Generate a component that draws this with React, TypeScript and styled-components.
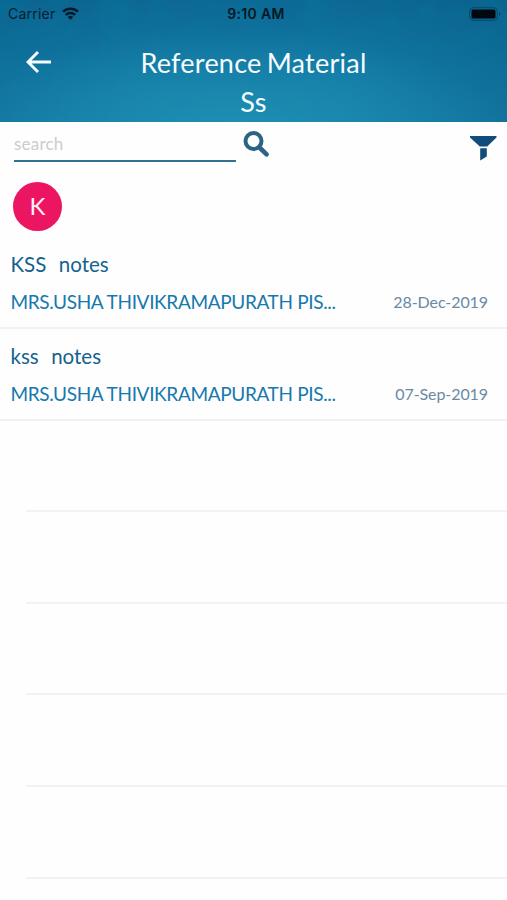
import React from 'react';
import styled, { createGlobalStyle } from 'styled-components';

const GlobalStyle = createGlobalStyle`
  * { box-sizing: border-box; }
  body { margin: 0; background: #fefefe; font-family: Lato, sans-serif; }
`;

const Screen = styled.main`
  display: flex;
  flex-direction: column;
  width: 507px;
  height: 900px;
  overflow: hidden;
  background: #fefefe;
`;

const Header = styled.header`
  position: relative;
  isolation: isolate;
  height: 122px;
  flex: none;
  background:
    radial-gradient(ellipse 270px 105px at 46% 108%, rgba(32, 147, 181, 0.8), rgba(32, 147, 181, 0) 100%),
    linear-gradient(to right, rgba(0, 75, 115, 0.14), transparent 30%, transparent 68%, rgba(0, 75, 115, 0.22)),
    linear-gradient(#0d6894, #1278a3 55%, #167fa9);
`;

const Texture = styled.svg`
  position: absolute;
  inset: 0;
  z-index: -1;
  width: 100%;
  height: 100%;
`;

const StatusBar = styled.div`
  display: grid;
  grid-template-columns: 1fr auto 1fr;
  align-items: center;
  height: 27px;
  padding: 0 6px 0 8px;
  color: #06202f;
  font-family: Inter, sans-serif;
  font-size: 14px;
`;

const Carrier = styled.div`
  display: flex;
  align-items: center;
  gap: 7px;
  letter-spacing: 0.22px;
`;

const Clock = styled.time`
  padding-left: 3px;
  color: #041824;
  font-size: 14px;
  font-weight: 600;
  letter-spacing: 0.34px;
`;

const BatteryIcon = styled.svg`
  justify-self: end;
`;

const TitleBar = styled.div`
  display: grid;
  grid-template-columns: 100px 1fr 100px;
  padding-top: 16px;
`;

const BackButton = styled.button`
  display: flex;
  align-items: flex-start;
  height: 40px;
  padding: 7px 0 0 26px;
  border: 0;
  background: none;
`;

const Title = styled.h1`
  margin: 0;
  color: #f5fcff;
  font-size: 27px;
  font-weight: 400;
  line-height: 39px;
  letter-spacing: 0.24px;
  word-spacing: -2px;
  text-align: center;
`;

const Toolbar = styled.section`
  display: flex;
  align-items: flex-start;
  height: 58px;
  flex: none;
  padding: 0 10px 0 14px;
`;

const SearchInput = styled.input`
  width: 222px;
  height: 40px;
  padding: 4px 0 0;
  border: 0;
  border-bottom: 2px solid #34708f;
  outline: 0;
  background: none;
  color: #125b80;
  font: 17px Lato, sans-serif;
  letter-spacing: 0.2px;
  &::placeholder { color: #cbcccd; opacity: 1; }
`;

const IconButton = styled.button<{ $end?: boolean }>`
  display: flex;
  margin-top: ${(p) => (p.$end ? '12px' : '8px')};
  margin-left: ${(p) => (p.$end ? 'auto' : '7px')};
  padding: 0;
  border: 0;
  background: none;
`;

const Avatar = styled.div`
  display: flex;
  align-items: center;
  justify-content: center;
  width: 49px;
  height: 49px;
  flex: none;
  margin: 2px 0 6px 13px;
  padding-bottom: 2px;
  border-radius: 50%;
  background: #ec1561;
  color: #fff0f6;
  font-size: 24px;
`;

const List = styled.ul`
  margin: 0;
  padding: 0;
  list-style: none;
`;

const Row = styled.li`
  height: 91.7px;
  padding: 0 19px 0 10.5px;
  border-bottom: 2px solid #f1f1f2;
  &:first-child { height: 92px; }
`;

const RowTitle = styled.h2`
  margin: 0;
  padding-top: 12px;
  color: #14628d;
  font-size: 20.5px;
  font-weight: 400;
  line-height: 30px;
  word-spacing: 1px;
  white-space: pre;
`;

const RowMeta = styled.div`
  display: flex;
  align-items: center;
  justify-content: space-between;
  height: 45px;
`;

const Author = styled.span`
  color: #1778ad;
  font-size: 19px;
  letter-spacing: -0.35px;
`;

const DateText = styled.time`
  padding-bottom: 1px;
  color: #6989a5;
  font-size: 16px;
  letter-spacing: -0.08px;
`;

const EmptyRow = styled.li`
  height: 91.6px;
  margin-left: 26px;
  border-bottom: 2px solid #f2f2f3;
`;

const notes = [
  { title: 'KSS  notes', author: 'MRS.USHA THIVIKRAMAPURATH PIS...', date: '28-Dec-2019' },
  { title: 'kss  notes', author: 'MRS.USHA THIVIKRAMAPURATH PIS...', date: '07-Sep-2019' },
];

export default function App() {
  return (
    <Screen>
      <GlobalStyle />
      <Header>
        <Texture aria-hidden="true">
          <defs>
            <filter id="clouds" x="0" y="0" width="100%" height="100%">
              <feTurbulence type="fractalNoise" baseFrequency="0.03 0.05" numOctaves="4" seed="4" />
              <feColorMatrix values="0 0 0 0 0  0 0 0 0 0.25  0 0 0 0 0.4  0.5 0 0 0 -0.18" />
            </filter>
            <linearGradient id="fade" x2="0" y2="1">
              <stop stopColor="#fff" />
              <stop offset="1" stopColor="#000" />
            </linearGradient>
            <mask id="topFade"><rect width="507" height="90" fill="url(#fade)" /></mask>
          </defs>
          <g mask="url(#topFade)"><rect width="507" height="122" filter="url(#clouds)" /></g>
        </Texture>
        <StatusBar>
          <Carrier>
            Carrier
            <svg width="17" height="13" viewBox="0 0 17 13" fill="none" stroke="#041b29" strokeWidth="2.5">
              <path d="M1 4.7a10.8 10.8 0 0 1 15 0M3.8 7.9a6.8 6.8 0 0 1 9.4 0" />
              <path d="M8.5 12.7 5.8 10a3.9 3.9 0 0 1 5.4 0Z" fill="#041b29" stroke="none" />
            </svg>
          </Carrier>
          <Clock>9:10 AM</Clock>
          <BatteryIcon width="32" height="14" viewBox="0 0 32 14">
            <rect x=".7" y=".7" width="27.6" height="12.6" rx="3.5" fill="none" stroke="#06476a" />
            <rect x="2.5" y="2.5" width="24" height="9" rx="1.5" fill="#01080f" />
            <path d="M30 5v4q1.5-.5 1.5-2T30 5" fill="#06476a" />
          </BatteryIcon>
        </StatusBar>
        <TitleBar>
          <BackButton aria-label="Back">
            <svg width="26" height="24" viewBox="0 0 26 24" fill="none" stroke="#f5fcff" strokeWidth="2.9">
              <path d="M25 12H2.5M12 2 2 12l10 10" />
            </svg>
          </BackButton>
          <Title>Reference Material<br />Ss</Title>
        </TitleBar>
      </Header>
      <Toolbar>
        <SearchInput placeholder="search" aria-label="search" />
        <IconButton aria-label="Search">
          <svg width="27" height="28" viewBox="0 0 27 28" fill="none" stroke="#2b6583">
            <circle cx="10.5" cy="11" r="8" strokeWidth="4" />
            <path d="m17 18 6.6 6.4" strokeWidth="4.6" strokeLinecap="round" />
          </svg>
        </IconButton>
        <IconButton $end aria-label="Filter">
          <svg width="27" height="27" viewBox="0 0 27 27" fill="#124c7d">
            <path d="M0 2h26.5v1.5L17.2 12.6H9.8L0 3.5ZM10.2 14.2h6.6v8.2l-6.6 4Z" />
          </svg>
        </IconButton>
      </Toolbar>
      <Avatar>K</Avatar>
      <List>
        {notes.map((note) => (
          <Row key={note.title}>
            <RowTitle>{note.title}</RowTitle>
            <RowMeta>
              <Author>{note.author}</Author>
              <DateText>{note.date}</DateText>
            </RowMeta>
          </Row>
        ))}
        {[0, 1, 2, 3, 4].map((n) => <EmptyRow key={n} />)}
      </List>
    </Screen>
  );
}
